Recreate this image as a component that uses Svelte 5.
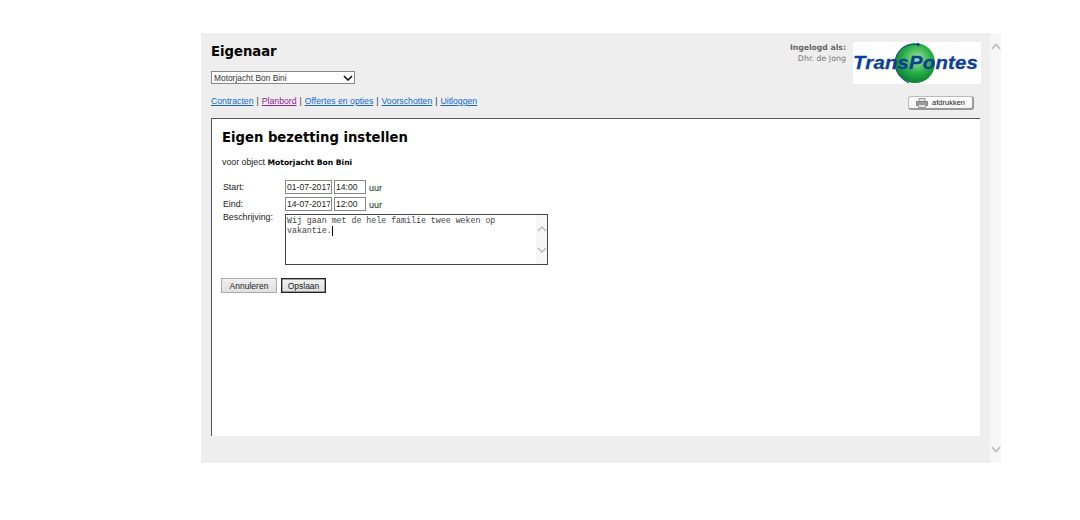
<script>
	let object = 'Motorjacht Bon Bini';
	const links = [
		{ label: 'Contracten' },
		{ label: 'Planbord', visited: true },
		{ label: 'Offertes en opties' },
		{ label: 'Voorschotten' },
		{ label: 'Uitloggen' }
	];
</script>

<div class="page">
	<div class="shell">
		<header class="top">
			<div class="left">
				<h1>Eigenaar</h1>
				<div class="select">
					<span>{object}</span>
					<svg width="10" height="6" viewBox="0 0 10 6"><path d="M1 1l4 4 4-4" fill="none" stroke="#111" stroke-width="1.6" /></svg>
				</div>
				<nav>
					{#each links as link, i}
						{#if i > 0}<span class="sep">|</span>{/if}
						<a href="#top" class:visited={link.visited}>{link.label}</a>
					{/each}
				</nav>
			</div>
			<div class="right">
				<div class="account">
					<div class="user">
						<b>Ingelogd als:</b>
						<span>Dhr. de Jong</span>
					</div>
					<div class="logo">
						<svg class="globe" width="50" height="42" viewBox="0 0 50 42">
							<defs>
								<radialGradient id="ball" cx="0.55" cy="0.4" r="0.6">
									<stop offset="0" stop-color="#a4e4a0" />
									<stop offset="0.6" stop-color="#27ae45" />
									<stop offset="1" stop-color="#0c7f34" />
								</radialGradient>
							</defs>
							<circle cx="26" cy="21" r="20" fill="url(#ball)" />
							<path d="M29 2.500C17 1 7 8 6 20c-.5 9 5 17 14 21" fill="none" stroke="#1d3f96" stroke-width="1" />
							<path d="M28 .5l4 2-4 2z" fill="#1d3f96" />
						</svg>
						<span class="brand">TransPontes</span>
					</div>
				</div>
				<button class="print">
					<svg width="12" height="10" viewBox="0 0 12 10">
						<rect x="3" y="0.5" width="6" height="3" fill="#e4e4e4" stroke="#999" />
						<rect x="0.5" y="3.500" width="11" height="4" fill="#999" stroke="#888" />
						<rect x="2.500" y="6.500" width="7" height="3" fill="#dfe8f2" stroke="#999" />
					</svg>
					afdrukken
				</button>
			</div>
		</header>

		<main class="panel">
			<h2>Eigen bezetting instellen</h2>
			<p class="sub">voor object <b>Motorjacht Bon Bini</b></p>

			<div class="form">
				<label for="start">Start:</label>
				<div class="row">
					<input id="start" class="date" value="01-07-2017" />
					<input class="time" value="14:00" />
					<span>uur</span>
				</div>
				<label for="eind">Eind:</label>
				<div class="row">
					<input id="eind" class="date" value="14-07-2017" />
					<input class="time" value="12:00" />
					<span>uur</span>
				</div>
				<label class="top-label" for="desc">Beschrijving:</label>
				<div class="area" id="desc">
					<div class="area-text">Wij gaan met de hele familie twee weken op vakantie.<i class="caret"></i></div>
					<div class="area-bar">
						<svg width="10" height="6" viewBox="0 0 10 6"><path d="M1 5l4-4 4 4" fill="none" stroke="#bbb" stroke-width="1.400" /></svg>
						<svg width="10" height="6" viewBox="0 0 10 6"><path d="M1 1l4 4 4-4" fill="none" stroke="#bbb" stroke-width="1.400" /></svg>
					</div>
				</div>
			</div>

			<div class="actions">
				<button class="cancel">Annuleren</button>
				<button class="save">Opslaan</button>
			</div>
		</main>
	</div>
	<div class="scrollbar">
		<svg width="10" height="7" viewBox="0 0 10 7"><path d="M1 6l4-4.500 4 4.500" fill="none" stroke="#b9b9b9" stroke-width="1.600" /></svg>
		<svg width="10" height="7" viewBox="0 0 10 7"><path d="M1 1l4 4.500 4-4.500" fill="none" stroke="#b9b9b9" stroke-width="1.600" /></svg>
	</div>
</div>

<style>
	:global(body) {
		margin: 0;
		background: #fff;
	}

	.page {
		display: flex;
		padding: 33px 0 0 201px;
		height: 430px;
		font-family: 'Liberation Sans', sans-serif;
		font-size: 8.800px;
		color: #222;
	}

	.shell {
		width: 769px;
		height: 430px;
		padding: 0 10px;
		background: #eee;
		display: flex;
		flex-direction: column;
	}

	.top {
		height: 85px;
		display: flex;
		justify-content: space-between;
	}

	h1 {
		margin: 10px 0 0;
		font-family: 'DejaVu Sans', sans-serif;
		font-size: 13.200px;
		line-height: 18px;
		font-weight: bold;
		color: #000;
	}

	.select {
		margin-top: 10px;
		width: 144px;
		height: 13px;
		box-sizing: border-box;
		border: 1px solid #888;
		background: #fff;
		display: flex;
		align-items: center;
		justify-content: space-between;
		padding: 0 1px 0 2px;
		font-size: 8.400px;
		color: #333;
	}

	nav {
		margin-top: 11px;
		line-height: 13px;
		display: flex;
		gap: 3px;
		font-size: 8.700px;
	}

	nav a {
		color: #0f6ac8;
	}

	nav a.visited {
		color: #8e248e;
	}

	.sep {
		color: #333;
	}

	.right {
		display: flex;
		flex-direction: column;
		align-items: flex-end;
	}

	.account {
		display: flex;
		gap: 7px;
		margin: 9px -1px 0 0;
	}

	.user {
		display: flex;
		flex-direction: column;
		align-items: flex-end;
		color: #777;
		line-height: 11px;
		font-family: 'DejaVu Sans', sans-serif;
		font-size: 7.900px;
	}

	.user b {
		color: #666;
		font-size: 7.700px;
	}

	.logo {
		width: 128px;
		height: 42px;
		background: #fff;
		position: relative;
		display: flex;
		align-items: center;
		overflow: hidden;
	}

	.globe {
		position: absolute;
		left: 36px;
		top: 0;
	}

	.brand {
		position: relative;
		font-weight: bold;
		font-style: italic;
		font-size: 19px;
		letter-spacing: 0.200px;
		color: #0d3f96;
		-webkit-text-stroke: 0.300px #0d3f96;
		transform: scaleX(1.070);
		transform-origin: left center;
	}

	.print {
		margin: 12px 6px 0 0;
		width: 63px;
		height: 11px;
		box-sizing: content-box;
		padding: 0;
		background: linear-gradient(#fff, #f4f4f4);
		border: 1px solid #bbb;
		border-right: 2px solid #999;
		border-bottom: 2px solid #999;
		border-radius: 3px;
		display: flex;
		align-items: center;
		justify-content: center;
		gap: 4px;
		font-family: 'Liberation Sans', sans-serif;
		font-size: 7.500px;
		color: #222;
	}

	.panel {
		background: #fff;
		height: 318px;
		box-sizing: border-box;
		border-top: 1px solid #555;
		border-left: 1px solid #555;
		padding: 10px 10px 0 10px;
	}

	h2 {
		margin: 0;
		font-family: 'DejaVu Sans', sans-serif;
		font-size: 13.200px;
		line-height: 18px;
		color: #000;
	}

	.sub {
		margin: 9px 0 0;
		line-height: 12px;
	}

	.sub b {
		font-family: 'DejaVu Sans', sans-serif;
		font-size: 7.600px;
		color: #000;
	}

	.form {
		margin: 11px 0 0 1px;
		display: grid;
		grid-template-columns: 62px auto;
		justify-content: start;
		row-gap: 2px;
	}

	label {
		line-height: 13px;
		padding-top: 1px;
	}

	.top-label {
		margin-top: -3px;
		padding-top: 0;
	}

	.row {
		display: flex;
		gap: 2px;
		align-items: flex-start;
		height: 15px;
	}

	.row span {
		margin: 2px 0 0 1px;
		line-height: 12px;
		font-size: 9px;
		color: #222;
	}

	input {
		height: 14px;
		box-sizing: border-box;
		border: 1px solid #888;
		padding: 0 1px;
		font-family: 'Liberation Sans', sans-serif;
		font-size: 8.600px;
		color: #222;
		outline: none;
	}

	.date {
		width: 47px;
	}

	.time {
		width: 32px;
	}

	.area {
		width: 263px;
		height: 51px;
		box-sizing: border-box;
		border: 1px solid #444;
		display: flex;
	}

	.area-text {
		flex: 1;
		padding: 1px;
		font-family: 'Liberation Mono', monospace;
		font-size: 8.280px;
		line-height: 10px;
		color: #444;
	}

	.caret {
		display: inline-block;
		width: 1px;
		height: 10px;
		background: #000;
		vertical-align: top;
	}

	.area-bar {
		width: 11px;
		background: #f6f6f6;
		display: flex;
		flex-direction: column;
		justify-content: space-between;
		align-items: center;
		padding: 11px 0 11px;
	}

	.actions {
		margin: 13px 0 0 -1px;
		display: flex;
		gap: 4px;
	}

	.actions button {
		height: 13px;
		box-sizing: content-box;
		font-family: 'Liberation Sans', sans-serif;
		font-size: 8.500px;
		padding: 0;
		color: #222;
		background: linear-gradient(#f0f0f0, #e0e0e0);
	}

	.cancel {
		width: 54px;
		border: 1px solid #aaa;
	}

	.save {
		width: 43px;
		border: 1px solid #222;
		box-shadow: inset 0 0 0 0.500px #555;
	}

	.scrollbar {
		width: 11px;
		background: #f6f6f6;
		height: 430px;
		display: flex;
		flex-direction: column;
		justify-content: space-between;
		align-items: center;
		padding: 10px 0 10px;
		box-sizing: border-box;
	}
</style>
